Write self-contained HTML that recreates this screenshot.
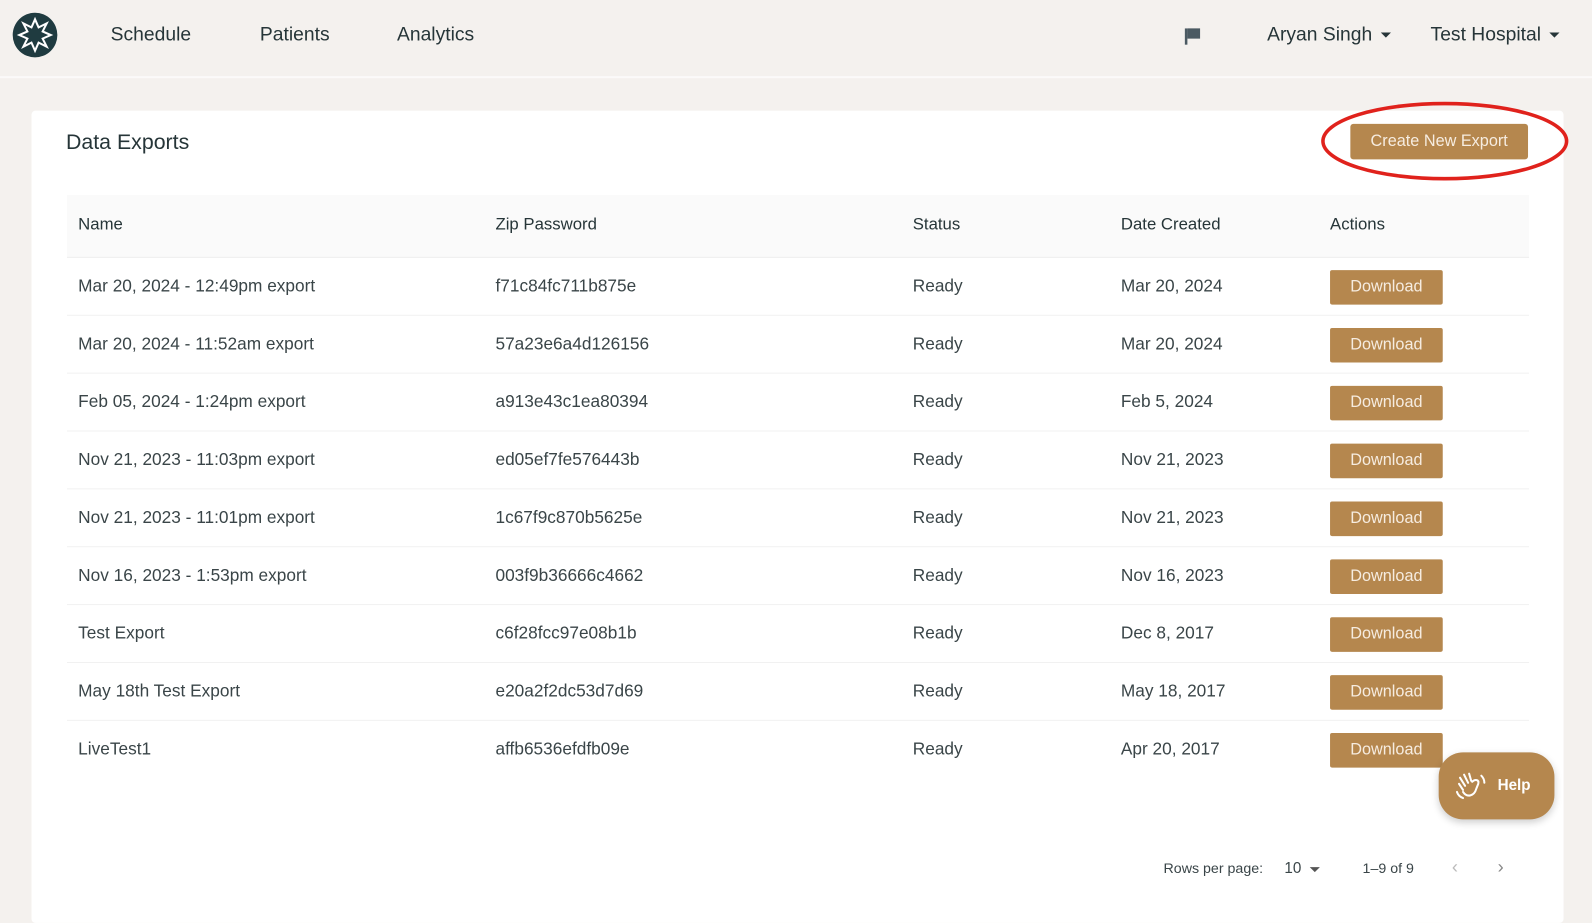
<!DOCTYPE html>
<html><head><style>
*{margin:0;padding:0;box-sizing:border-box}
body{width:1592px;height:896px;background:#f4f1ee;font-family:"Liberation Sans",sans-serif;color:#2d3a3c;overflow:hidden}
#w{position:relative;width:1568px;height:883px;transform:scale(1.0153);transform-origin:0 0}
.nav{position:absolute;top:0;left:0;width:1568px;height:77px;border-bottom:2px solid #fbfaf9}
.nav span{position:absolute;top:24px;font-size:19px;color:#263538}
.tri{display:inline-block;width:0;height:0;border-left:5px solid transparent;border-right:5px solid transparent;border-top:5px solid #263538;vertical-align:middle;margin-left:8px}
.card{position:absolute;left:31px;top:109px;width:1509px;height:800px;background:#fff;border-radius:4px}
h1{position:absolute;left:34px;top:20px;font-size:21px;font-weight:normal;color:#263538}
.cne{position:absolute;left:1299px;top:13px;width:175px;height:35px;background:#b5874e;color:#f6ece0;font-size:16px;text-align:center;line-height:35px;border-radius:3px}
.thead{position:absolute;left:35px;top:83px;width:1440px;height:62px;background:#fafafa;border-bottom:1px solid #eee}
.row{position:absolute;left:35px;width:1440px;height:57px;border-bottom:1px solid #f1f1f1;font-size:17px;color:#3a4548}
.c{position:absolute;top:18px}
.thead .c{top:20px;font-size:16.5px;color:#263538}
.dl{position:absolute;left:1244px;top:12px;width:111px;height:34px;background:#b5874e;color:#f6ece0;font-size:16px;text-align:center;line-height:34px;border-radius:2px}
.help{position:absolute;left:1417px;top:741px;width:114px;height:66px;background:#b5874e;border-radius:24px;color:#fff;font-weight:bold;font-size:15px;box-shadow:0 3px 8px rgba(0,0,0,.2)}
.pg{position:absolute;top:847px;font-size:14px;color:#3a4548}
</style></head><body><div id="w">
<div class="nav">
<svg style="position:absolute;left:12px;top:12px" width="45" height="45" viewBox="0 0 45 45"><circle cx="22.5" cy="22.5" r="22" fill="#1f3b40"/><polygon points="22.5,7 26,15 34,11 30,19 38,22.5 30,26 34,34 26,30 22.5,38 19,30 11,34 15,26 7,22.5 15,19 11,11 19,15" fill="none" stroke="#fff" stroke-width="2"/></svg>
<span style="left:109px">Schedule</span><span style="left:256px">Patients</span><span style="left:391px">Analytics</span>
<svg style="position:absolute;left:1166px;top:27px" width="18" height="18" viewBox="0 0 18 18"><rect x="1" y="1" width="2.5" height="16" fill="#4b5a62"/><path d="M3.5 1H16V11H3.5Z" fill="#4b5a62"/></svg>
<span style="left:1248px">Aryan Singh<i class="tri"></i></span><span style="left:1409px">Test Hospital<i class="tri"></i></span>
</div>
<div class="card">
<h1>Data Exports</h1>
<div class="cne">Create New Export</div>
<svg style="position:absolute;left:1268px;top:-10px" width="250" height="82"><ellipse cx="124" cy="40" rx="120" ry="37" fill="none" stroke="#e0221c" stroke-width="3.5"/></svg>
<div class="thead"><span class="c" style="left:11px">Name</span><span class="c" style="left:422px">Zip Password</span><span class="c" style="left:833px">Status</span><span class="c" style="left:1038px">Date Created</span><span class="c" style="left:1244px">Actions</span></div>
<div class="row" style="top:145px"><span class="c" style="left:11px">Mar 20, 2024 - 12:49pm export</span><span class="c" style="left:422px">f71c84fc711b875e</span><span class="c" style="left:833px">Ready</span><span class="c" style="left:1038px">Mar 20, 2024</span><div class="dl">Download</div></div>
<div class="row" style="top:202px"><span class="c" style="left:11px">Mar 20, 2024 - 11:52am export</span><span class="c" style="left:422px">57a23e6a4d126156</span><span class="c" style="left:833px">Ready</span><span class="c" style="left:1038px">Mar 20, 2024</span><div class="dl">Download</div></div>
<div class="row" style="top:259px"><span class="c" style="left:11px">Feb 05, 2024 - 1:24pm export</span><span class="c" style="left:422px">a913e43c1ea80394</span><span class="c" style="left:833px">Ready</span><span class="c" style="left:1038px">Feb 5, 2024</span><div class="dl">Download</div></div>
<div class="row" style="top:316px"><span class="c" style="left:11px">Nov 21, 2023 - 11:03pm export</span><span class="c" style="left:422px">ed05ef7fe576443b</span><span class="c" style="left:833px">Ready</span><span class="c" style="left:1038px">Nov 21, 2023</span><div class="dl">Download</div></div>
<div class="row" style="top:373px"><span class="c" style="left:11px">Nov 21, 2023 - 11:01pm export</span><span class="c" style="left:422px">1c67f9c870b5625e</span><span class="c" style="left:833px">Ready</span><span class="c" style="left:1038px">Nov 21, 2023</span><div class="dl">Download</div></div>
<div class="row" style="top:430px"><span class="c" style="left:11px">Nov 16, 2023 - 1:53pm export</span><span class="c" style="left:422px">003f9b36666c4662</span><span class="c" style="left:833px">Ready</span><span class="c" style="left:1038px">Nov 16, 2023</span><div class="dl">Download</div></div>
<div class="row" style="top:487px"><span class="c" style="left:11px">Test Export</span><span class="c" style="left:422px">c6f28fcc97e08b1b</span><span class="c" style="left:833px">Ready</span><span class="c" style="left:1038px">Dec 8, 2017</span><div class="dl">Download</div></div>
<div class="row" style="top:544px"><span class="c" style="left:11px">May 18th Test Export</span><span class="c" style="left:422px">e20a2f2dc53d7d69</span><span class="c" style="left:833px">Ready</span><span class="c" style="left:1038px">May 18, 2017</span><div class="dl">Download</div></div>
<div class="row" style="top:601px;border:none"><span class="c" style="left:11px">LiveTest1</span><span class="c" style="left:422px">affb6536efdfb09e</span><span class="c" style="left:833px">Ready</span><span class="c" style="left:1038px">Apr 20, 2017</span><div class="dl">Download</div></div>
</div>
<div class="help"><svg style="position:absolute;left:16px;top:17px" width="34" height="32" viewBox="0 0 34 32" fill="none" stroke="#fff" stroke-width="2" stroke-linecap="round"><path d="M8 20 L4 14 M10 16 L5 8 M13 13 L9 5 M16 11 L14 4 M17 12 C20 9 24 10 23 14 L21 19 C19 26 12 28 8 22"/><path d="M26 6 C28 8 29 10 29 13 M2 22 C3 25 5 27 8 28"/></svg><span style="position:absolute;left:58px;top:24px">Help</span></div>
<span class="pg" style="left:1146px">Rows per page:</span><span class="pg" style="left:1265px;font-size:15px">10<i class="tri" style="border-top-color:#555"></i></span><span class="pg" style="left:1342px">1–9 of 9</span>
<span class="pg" style="left:1430px;color:#bbb;font-size:18px;top:844px">‹</span><span class="pg" style="left:1475px;color:#888;font-size:18px;top:844px">›</span>
</div></body></html>
